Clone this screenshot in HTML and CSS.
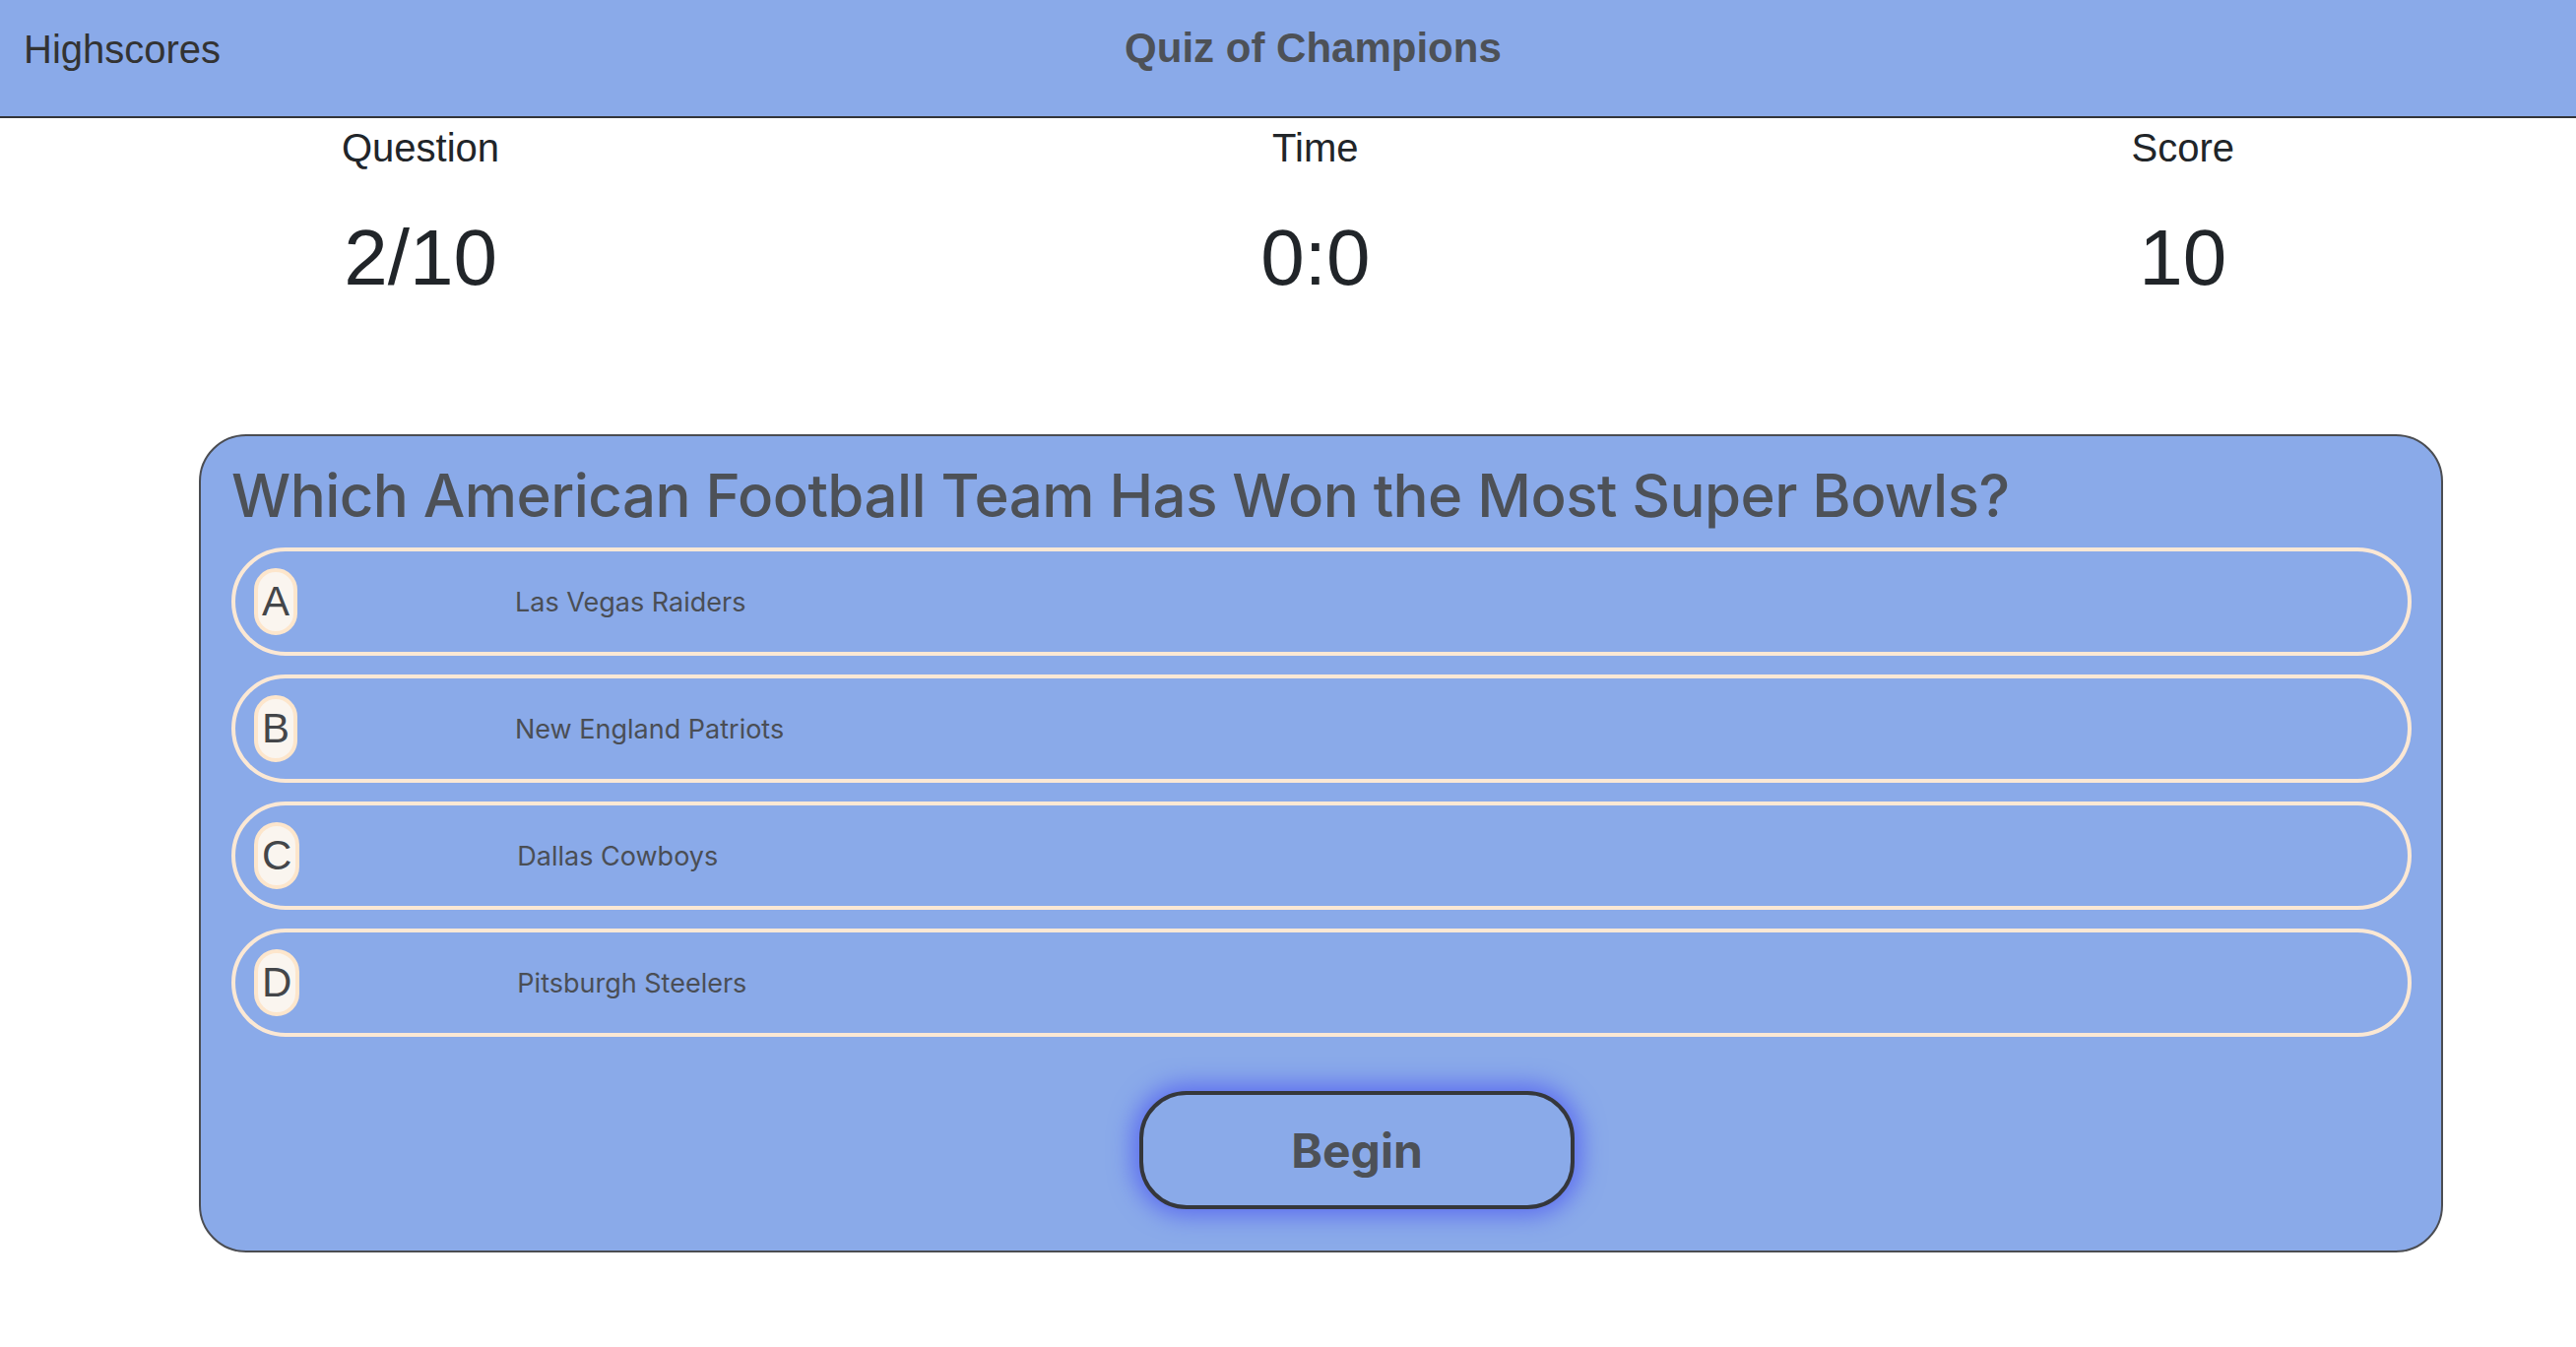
FILE: index.html
```html
<!DOCTYPE html>
<html lang="en">
<head>
<meta charset="utf-8">
<title>Quiz of Champions</title>
<link rel="stylesheet" href="styles.css">
</head>
<body>
  <header class="topbar">
    <a class="highscores" href="#">Highscores</a>
    <h1 class="brand">Quiz of Champions</h1>
  </header>

  <section class="stats">
    <div class="stat">
      <span class="stat-label">Question</span>
      <span class="stat-value">2/10</span>
    </div>
    <div class="stat">
      <span class="stat-label">Time</span>
      <span class="stat-value">0:0</span>
    </div>
    <div class="stat">
      <span class="stat-label">Score</span>
      <span class="stat-value">10</span>
    </div>
  </section>

  <main class="card">
    <h2 class="question">Which American Football Team Has Won the Most Super Bowls?</h2>
    <ul class="answers">
      <li class="answer"><span class="letter">A</span><span class="answer-text">Las Vegas Raiders</span></li>
      <li class="answer"><span class="letter">B</span><span class="answer-text">New England Patriots</span></li>
      <li class="answer"><span class="letter">C</span><span class="answer-text">Dallas Cowboys</span></li>
      <li class="answer"><span class="letter">D</span><span class="answer-text">Pitsburgh Steelers</span></li>
    </ul>
    <div class="actions">
      <button class="begin" type="button">Begin</button>
    </div>
  </main>
</body>
</html>
```

FILE: styles.css
```css
* { box-sizing: border-box; }

html, body {
  margin: 0;
  padding: 0;
  background: #ffffff;
}

body {
  font-family: "Liberation Sans", Arial, sans-serif;
  color: #212529;
}

.topbar {
  display: flex;
  align-items: flex-start;
  height: 120px;
  padding: 25px 0 0 24px;
  background: #8aaae9;
  border-bottom: 2px solid #333538;
}

.highscores {
  font-family: "Liberation Sans", Arial, sans-serif;
  font-size: 40px;
  color: #333333;
  text-decoration: none;
  line-height: 48px;
  margin-top: 1px;
}

.brand {
  margin: 0 0 0 918px;
  font-family: "Liberation Sans", Arial, sans-serif;
  font-weight: 700;
  font-size: 42px;
  line-height: 48px;
  color: #4d5157;
}

.stats {
  display: flex;
  justify-content: space-between;
  padding: 6px 347px 0 347px;
}

.stat {
  display: flex;
  flex-direction: column;
  align-items: center;
}

.stat-label {
  font-size: 40px;
  line-height: 48px;
  color: #212529;
}

.stat-value {
  margin-top: 40px;
  font-size: 80px;
  line-height: 96px;
  color: #212529;
}

.card {
  display: block;
  margin: 131px 135px 0 202px;
  padding: 24px 30px 42px 31px;
  background: #8aaae9;
  border: 2px solid #4b4d52;
  border-radius: 48px;
}

.question {
  margin: 0 0 17px;
  font-family: Inter, "Noto Sans", sans-serif;
  font-weight: 500;
  font-size: 60px;
  letter-spacing: -0.55px;
  line-height: 72px;
  color: #4d5157;
}

.answers {
  list-style: none;
  margin: 0;
  padding: 0;
}

.answer {
  display: flex;
  align-items: center;
  height: 110px;
  margin-bottom: 19px;
  padding: 0 19px;
  border: 4px solid #fbe8d4;
  border-radius: 56px;
}

.answer:last-child { margin-bottom: 0; }

.letter {
  display: flex;
  align-items: center;
  justify-content: center;
  height: 68px;
  padding: 0 4px;
  background: #faf5ef;
  border: 4px solid #fde6cc;
  border-radius: 999px;
  font-family: "Liberation Sans", Arial, sans-serif;
  font-size: 42px;
  color: #444649;
}

.answer-text {
  margin-left: 221px;
  font-family: Inter, "Noto Sans", sans-serif;
  font-size: 27px;
  color: #4a4e55;
}

.actions {
  display: flex;
  margin-top: 55px;
}

.begin {
  margin-left: 922px;
  width: 442px;
  height: 120px;
  background: #8aaae9;
  border: 4px solid #35373b;
  border-radius: 48px;
  box-shadow: 0 0 24px 6px #5b6bf0;
  font-family: Inter, "Noto Sans", sans-serif;
  font-weight: 700;
  font-size: 48px;
  color: #4d5157;
  cursor: pointer;
}
```
